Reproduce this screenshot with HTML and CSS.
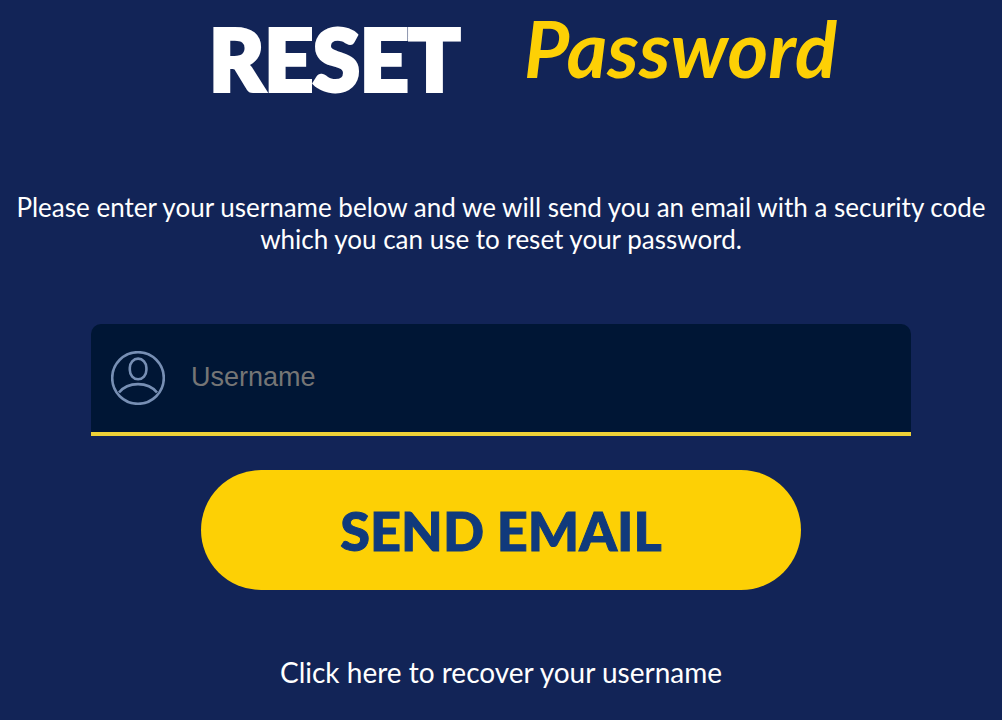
FILE: index.html
```
<!DOCTYPE html>
<html lang="en">
<head>
    <meta charset="UTF-8">
    <meta name="viewport" content="width=device-width, initial-scale=1.0">
    <title>Reset Password</title>
    <link rel="stylesheet" href="styles.css">
</head>
<body>
    <main class="reset-page">
        <h1 class="title">
            <span class="title-main">RESET</span>
            <span class="title-script">Password</span>
        </h1>

        <p class="intro">Please enter your username below and we will send you an email with a security code which you can use to reset your password.</p>

        <form class="reset-form">
            <div class="field">
                <label for="username" aria-label="Username">
                    <svg class="user-icon" viewBox="0 0 54 54" aria-hidden="true">
                        <circle cx="27" cy="27" r="25.8"/>
                        <rect x="18.8" y="7.6" width="16.6" height="20.6" rx="8.3" ry="9.2"/>
                        <path d="M8 41.5C17 30.3 37 30.3 46 41.5"/>
                    </svg>
                </label>
                <input type="text" id="username" name="username" placeholder="Username">
            </div>
            <button type="submit" class="send-button">SEND EMAIL</button>
        </form>

        <a class="recover-link" href="#">Click here to recover your username</a>
    </main>
</body>
</html>
```

FILE: styles.css
```
body {
    margin: 0;
    background: #122457;
    color: white;
    font-family: Lato, sans-serif;
}

.reset-page {
    display: flex;
    flex-direction: column;
    align-items: center;
    padding: 10px 12px 28px;
}

.title {
    display: flex;
    justify-content: center;
    gap: 64px;
    margin: 0 0 85px;
    padding-left: 44px;
    line-height: 96px;
}

.title-main {
    font-size: 85px;
    font-weight: 900;
    -webkit-text-stroke: 4px white;
}

.title-script {
    color: #fdd005;
    font-size: 78px;
    font-style: italic;
    font-weight: 700;
    line-height: 76px;
}

.intro {
    margin: 0 0 69px;
    font-size: 26px;
    line-height: 32px;
    text-align: center;
}

.reset-form {
    display: flex;
    flex-direction: column;
    align-items: center;
    gap: 34px;
    width: 100%;
    max-width: 820px;
    margin-bottom: 64px;
}

.field {
    display: flex;
    align-items: center;
    gap: 26px;
    box-sizing: border-box;
    width: 100%;
    height: 112px;
    padding: 0 20px;
    background: #001635;
    border-bottom: 4px solid #eed137;
    border-radius: 10px 10px 0 0;
}

.user-icon {
    display: block;
    width: 54px;
    height: 54px;
    fill: none;
    stroke: #778fb4;
    stroke-width: 2.6;
}

.field input {
    flex: 1;
    min-width: 0;
    padding: 0 0 2px;
    background: none;
    border: none;
    outline: none;
    color: white;
    font-family: "Liberation Sans", Arial, sans-serif;
    font-size: 27px;
}

.field input::placeholder {
    color: #757575;
}

.send-button {
    width: 600px;
    max-width: 100%;
    height: 120px;
    padding: 0;
    background: #fdd005;
    border: none;
    border-radius: 60px;
    color: #103a7c;
    font-family: Lato, sans-serif;
    font-size: 54px;
    font-weight: 900;
    -webkit-text-stroke: 1px #103a7c;
    cursor: pointer;
}

.recover-link {
    color: white;
    font-size: 28px;
    line-height: 36px;
    text-decoration: none;
}
```
